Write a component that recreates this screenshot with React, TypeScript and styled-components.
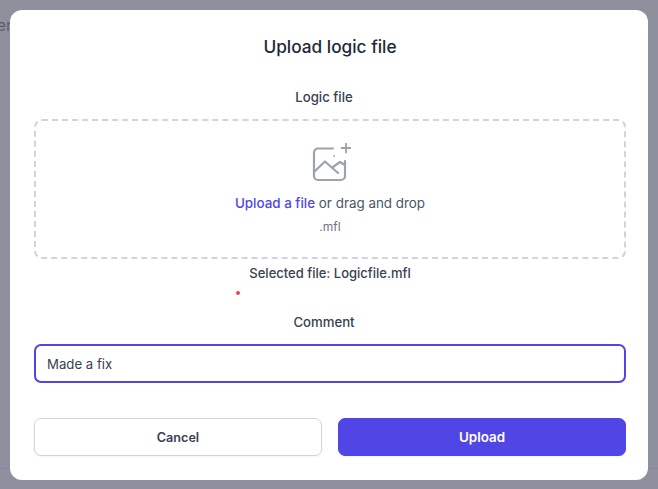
import React from 'react';
import styled, { createGlobalStyle } from 'styled-components';

const GlobalStyle = createGlobalStyle`
  html, body {
    margin: 0;
    height: 100%;
    overflow: hidden;
    font-family: Inter, "Liberation Sans", sans-serif;
  }
  * { box-sizing: border-box; }
`;

const Page = styled.div`
  position: relative;
  width: 658px;
  height: 489px;
  background: #fff;
  overflow: hidden;
`;

const BehindText = styled.div`
  position: absolute;
  left: -48px;
  top: 15px;
  width: 60px;
  text-align: right;
  font-size: 16px;
  line-height: 20px;
  color: #1f2937;
`;

const BehindLine = styled.div`
  position: absolute;
  left: 0;
  right: 0;
  top: 468px;
  height: 1px;
  background: #e5e7eb;
`;

const Overlay = styled.div`
  position: absolute;
  inset: 0;
  padding: 10px;
  background: rgba(107, 109, 128, 0.76);
`;

const Modal = styled.div`
  width: 638px;
  height: 470px;
  padding: 25px 22px 24px 24px;
  background: #fff;
  border-radius: 12px;
  display: flex;
  flex-direction: column;
  align-items: stretch;
`;

const Title = styled.h3`
  margin: 0;
  font-size: 17.25px;
  line-height: 24px;
  font-weight: 500;
  color: #1f2937;
  text-align: center;
`;

const Label = styled.label`
  display: block;
  margin-top: ${props => props.$top}px;
  margin-right: 12px;
  font-size: 13.2px;
  line-height: 20px;
  font-weight: 500;
  color: #374151;
  text-align: center;
`;

const Dropzone = styled.div`
  margin-top: 12px;
  height: 140px;
  border: 2px dashed #d1d5db;
  border-radius: 8px;
  display: flex;
  flex-direction: column;
  align-items: center;
  padding-top: 22px;
`;

const UploadIcon = styled.svg`
  display: block;
  width: 42px;
  height: 42px;
  color: #9ca3af;
`;

const DropText = styled.div`
  margin-top: 8px;
  font-size: 13.4px;
  line-height: 20px;
  color: #4b5563;
`;

const DropLink = styled.span`
  font-weight: 500;
  color: #4f46e5;
`;

const DropHint = styled.div`
  margin-top: 6px;
  font-size: 12px;
  line-height: 16px;
  color: #6b7280;
`;

const SelectedFile = styled.div`
  margin-top: 4px;
  font-size: 13px;
  line-height: 20px;
  font-weight: 500;
  color: #374151;
  text-align: center;
`;

const ErrorRow = styled.div`
  height: 4px;
  margin-top: 8px;
  padding-left: 202px;
`;

const ErrorDot = styled.div`
  width: 4px;
  height: 4px;
  border-radius: 50%;
  background: #ef4444;
`;

const CommentInput = styled.input`
  display: block;
  width: 100%;
  height: 39px;
  margin-top: 12px;
  padding: 0 11px;
  border: 2px solid #4f46e5;
  border-radius: 7px;
  outline: none;
  font-family: inherit;
  font-size: 13.2px;
  color: #374151;
  background: #fff;
`;

const Actions = styled.div`
  display: grid;
  grid-template-columns: 288px 288px;
  gap: 16px;
  margin-top: 35px;
`;

const Button = styled.button`
  height: 38px;
  border-radius: 7px;
  font-family: inherit;
  font-size: ${props => (props.$primary ? '13.4px' : '12.6px')};
  font-weight: 600;
  border: 1px solid ${props => (props.$primary ? '#4f46e5' : '#d1d5db')};
  background: ${props => (props.$primary ? '#4f46e5' : '#fff')};
  color: ${props => (props.$primary ? '#fff' : '#374151')};
  box-shadow: 0 1px 2px rgba(0, 0, 0, 0.05);
`;

export default function App() {
  return (
    <Page>
      <GlobalStyle />
      <BehindText>User</BehindText>
      <BehindLine />
      <Overlay>
        <Modal>
          <Title>Upload logic file</Title>
          <Label $top={28}>Logic file</Label>
          <Dropzone>
            <UploadIcon viewBox="0 0 42 42" fill="none" stroke="currentColor" strokeWidth="2.200" strokeLinecap="round" strokeLinejoin="round">
              <path d="M24 5.500H9a4 4 0 0 0-4 4V33a4 4 0 0 0 4 4h23a4 4 0 0 0 4-4V18" />
              <path d="M5 29l11-10.500L29 30" />
              <path d="M24 24l7-5 5 3" />
              <path d="M37 .5v9M32.500 5h9" strokeWidth="1.800" />
              <circle cx="25" cy="13" r="0.500" fill="currentColor" strokeWidth="0.800" />
            </UploadIcon>
            <DropText>
              <DropLink>Upload a file</DropLink> or drag and drop
            </DropText>
            <DropHint>.mfl</DropHint>
          </Dropzone>
          <SelectedFile>Selected file: Logicfile.mfl</SelectedFile>
          <ErrorRow>
            <ErrorDot />
          </ErrorRow>
          <Label $top={17}>Comment</Label>
          <CommentInput defaultValue="Made a fix" />
          <Actions>
            <Button>Cancel</Button>
            <Button $primary>Upload</Button>
          </Actions>
        </Modal>
      </Overlay>
    </Page>
  );
}
